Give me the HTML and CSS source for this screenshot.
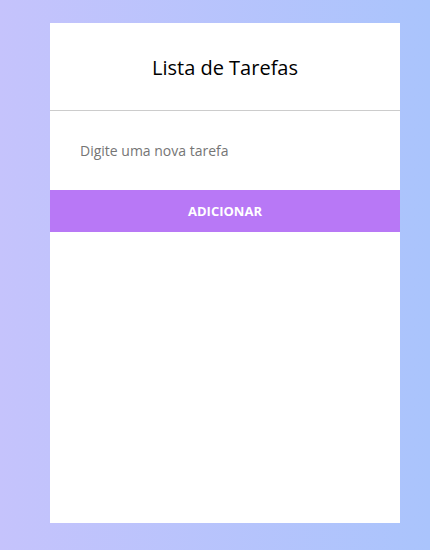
FILE: index.html
```html
<!DOCTYPE html>
<html lang="pt">
<head>
<meta charset="utf-8">
<title>Lista de Tarefas</title>
<link rel="stylesheet" href="styles.css">
</head>
<body>
<main class="card">
  <header class="card-header">
    <h1 class="title">Lista de Tarefas</h1>
  </header>
  <form class="task-form">
    <input class="task-input" type="text" placeholder="Digite uma nova tarefa">
    <button class="add-btn" type="button">ADICIONAR</button>
  </form>
  <ul class="task-list"></ul>
</main>
</body>
</html>
```
FILE: styles.css
```css
html, body {
  margin: 0;
  padding: 0;
  height: 100%;
}
body {
  background: linear-gradient(to right, #c5c3fc, #aac4fc);
  font-family: "Open Sans", "Noto Sans", sans-serif;
  display: flex;
  justify-content: flex-start;
  align-items: flex-start;
  padding-left: 50px;
  box-sizing: border-box;
}
.card {
  margin-top: 23px;
  width: 350px;
  height: 500px;
  background: #fff;
  display: flex;
  flex-direction: column;
}
.card-header {
  height: 87px;
  border-bottom: 1px solid #cccccc;
  display: flex;
  align-items: center;
  justify-content: center;
}
.title {
  margin: 0;
  font-size: 20px;
  font-weight: 400;
  color: #000;
  padding-top: 2px;
}
.task-form {
  display: flex;
  flex-direction: column;
  margin: 0;
}
.task-input {
  height: 79px;
  border: none;
  outline: none;
  padding: 0 30px;
  font-family: inherit;
  font-size: 14px;
  color: #333;
  box-sizing: border-box;
  width: 100%;
}
.task-input::placeholder {
  color: #757575;
}
.add-btn {
  height: 42px;
  border: none;
  background: #b878f6;
  color: #fff;
  font-family: inherit;
  font-weight: 700;
  font-size: 13px;
  padding: 0;
  cursor: pointer;
}
.task-list {
  list-style: none;
  margin: 0;
  padding: 0;
}
```
